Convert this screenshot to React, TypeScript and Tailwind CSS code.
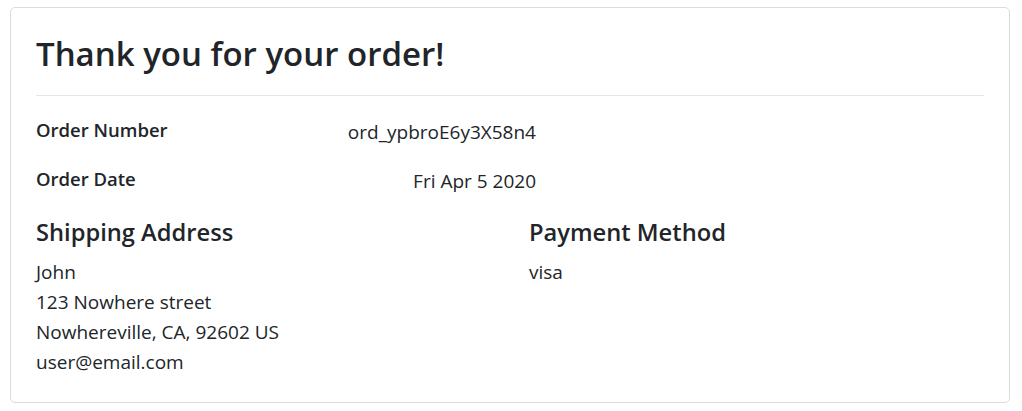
import React from 'react';

const font = { fontFamily: '"Open Sans", "Noto Sans", sans-serif' };

const InfoRow: React.FC<{ label: string; value: string; className?: string }> = ({ label, value, className }) => (
  <div className={`flex items-start ${className ?? ''}`}>
    <div className="w-[300px] text-[18.5px] leading-[27px] font-semibold">{label}</div>
    <div className="w-[200px] pt-[3px] text-right text-[19px] leading-[27px]">{value}</div>
  </div>
);

export default function App() {
  return (
    <div className="min-h-screen bg-white pl-[10px] pr-[12px] pt-[7px] text-[#212529]" style={font}>
      <div className="rounded-[5px] border border-[#dcdcdc] px-[25px] pt-[24px] pb-[25px]">
        <h2 className="text-[33px] leading-[44px] font-semibold">Thank you for your order!</h2>
        <hr className="mt-[19px] border-t border-[#e5e5e5]" />

        <InfoRow className="mt-[20px]" label="Order Number" value="ord_ypbroE6y3X58n4" />
        <InfoRow className="mt-[19px]" label="Order Date" value="Fri Apr 5 2020" />

        <div className="mt-[23px] grid grid-cols-[493px_1fr]">
          <div>
            <h4 className="text-[23.7px] leading-[29px] font-semibold">Shipping Address</h4>
            <div className="mt-[10px] text-[19px] leading-[30px]">
              <div>John</div>
              <div>123 Nowhere street</div>
              <div>Nowhereville, CA, 92602 US</div>
              <div>user@email.com</div>
            </div>
          </div>
          <div>
            <h4 className="text-[23.7px] leading-[29px] font-semibold">Payment Method</h4>
            <div className="mt-[10px] text-[19px] leading-[30px]">visa</div>
          </div>
        </div>
      </div>
    </div>
  );
}
